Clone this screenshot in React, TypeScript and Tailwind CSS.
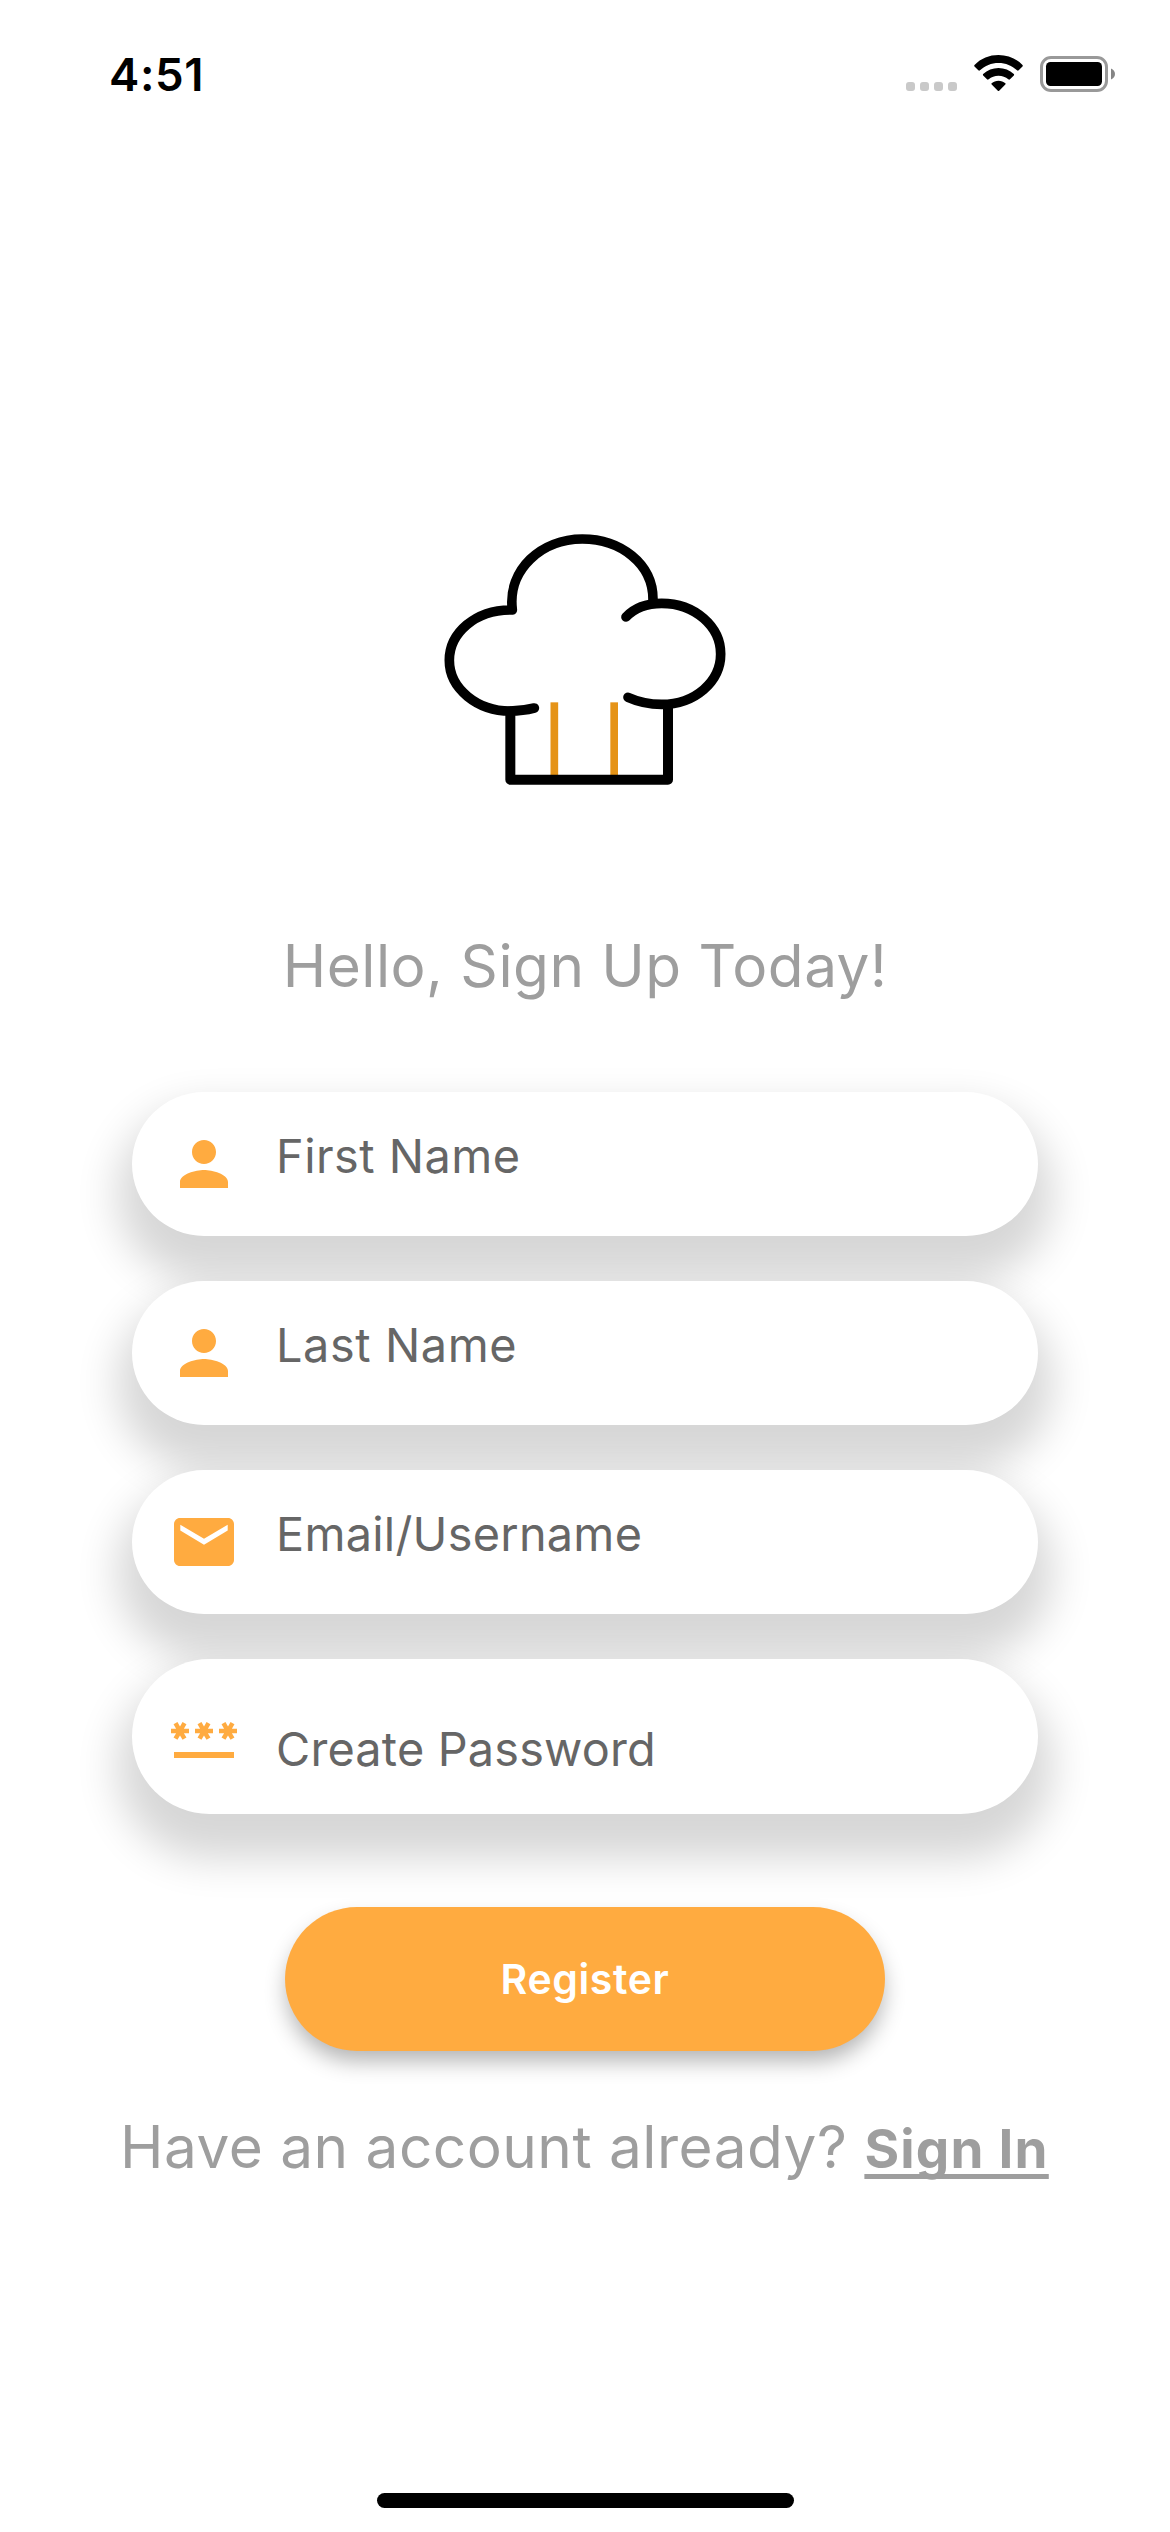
import type { ReactNode } from "react";

function StatusBar() {
  return (
    <header className="flex h-[142px] items-start justify-between pl-[109px] pr-[55px]">
      <span className="mt-[47px] text-[45.5px] leading-[56px] font-semibold tracking-[0.6px] text-black">
        4:51
      </span>
      <div className="mt-[55px] flex h-[37px] items-start">
        <div className="mt-[27px] flex gap-[5px]">
          {[0, 1, 2, 3].map((i) => (
            <span key={i} className="size-[9px] rounded-[3px] bg-[#c9c9c9]" />
          ))}
        </div>
        <svg className="ml-[17px] h-[36px] w-[49px]" viewBox="0 0 147 108">
          <path d="M73.500 0C101 0 126 10 145.500 30Q147.500 32.500 145.500 34.500L134 46Q131.500 48 129 46C114 32 95 24 73.500 24C52 24 33 32 18 46Q15.500 48 13 46L1.500 34.500Q-0.500 32.500 1.500 30C21 10 46 0 73.500 0Z" />
          <path d="M73.500 39C91 39 107 46 119.500 57Q121.500 59.500 119.500 61.500L108 73Q105.500 75 103 73C95 66 85 62 73.500 62C62 62 52 66 44 73Q41.500 75 39 73L27.500 61.500Q25.500 59.500 27.500 57C40 46 56 39 73.500 39Z" />
          <path d="M73.500 77C81.500 77 88.500 80 94 84.500Q96 86.500 94 88.500L75.500 107Q73.500 108.500 71.500 107L53 88.500Q51 86.500 53 84.500C58.500 80 65.500 77 73.500 77Z" />
        </svg>
        <svg className="ml-[17px] h-[37px] w-[75px]" viewBox="0 0 75 37">
          <rect x="1.500" y="2.500" width="65" height="33" rx="9.500" fill="none" stroke="#999" strokeWidth="3" />
          <rect x="6" y="7" width="56" height="24" rx="4.500" />
          <path d="M71 13.500C73.500 14.500 75 16.500 75 19S73.500 23.500 71 24.500Z" fill="#858585" />
        </svg>
      </div>
    </header>
  );
}

function ChefHat() {
  return (
    <svg className="h-[280px] w-[310px] self-start ml-[430px]" viewBox="0 0 930 840" fill="none">
      <g stroke="#e59317" strokeWidth="23">
        <path d="M373 547V768" />
        <path d="M552.500 547V768" />
      </g>
      <g stroke="#000" strokeWidth="29" strokeLinejoin="round" strokeLinecap="round">
        <path d="M241 574V779.500H714V555" strokeWidth="30" />
        <path d="M669 240C670 130 570 57 457 57C335 57 232 148 247 270C135 268 58 340 58 421C58 507 143 573 240 573C268 573 290 570 313 564" />
        <path d="M588 291C615 262 650 250 695 250C795 250 872 320 872 402C872 485 795 553 695 553C655 553 625 546 594 532" />
      </g>
    </svg>
  );
}

function MaterialIcon({ d }: { d: string }) {
  return (
    <svg className="size-[72px] shrink-0 text-[#ffab40]" viewBox="0 0 24 24" fill="currentColor">
      <path d={d} />
    </svg>
  );
}

const PERSON =
  "M12 12c2.210 0 4-1.790 4-4s-1.790-4-4-4-4 1.790-4 4 1.790 4 4 4zm0 2c-2.670 0-8 1.340-8 4v2h16v-2c0-2.660-5.330-4-8-4z";
const MAIL =
  "M20 4H4c-1.100 0-1.990.9-1.990 2L2 18c0 1.100.9 2 2 2h16c1.100 0 2-.9 2-2V6c0-1.100-.9-2-2-2zm-.1 4.200l-7.900 4.700-7.900-4.700V6.250l7.900 4.650 7.900-4.650v1.950z";
const PASSWORD =
  "M2 17h20v2H2v-2zm1.150-4.050L4 11.470l.85 1.480 1.300-.75-.85-1.480H7v-1.500H5.300l.85-1.470L4.850 7 4 8.470 3.150 7l-1.300.75.85 1.470H1v1.500h1.700l-.85 1.480 1.300.75zm6.700-.75l1.300.75.85-1.480.85 1.480 1.300-.75-.85-1.480H15v-1.500h-1.700l.85-1.470-1.300-.75L12 8.470 11.150 7l-1.300.75.85 1.470H9v1.500h1.700l-.85 1.480zM23 9.220h-1.700l.85-1.470-1.300-.75L20 8.470 19.150 7l-1.300.75.85 1.470H17v1.500h1.700l-.85 1.480 1.300.75.85-1.480.85 1.480 1.300-.75-.85-1.480H23v-1.500z";

type FieldProps = { icon: ReactNode; label: string; size: string; text: string };

function Field({ icon, label, size, text }: FieldProps) {
  return (
    <label
      className={`flex w-full pl-[36px] bg-white shadow-[0_30px_42px_15px_rgba(0,0,0,0.16)] ${size}`}
    >
      {icon}
      <span className={`ml-[36px] text-[46.8px] leading-[56px] text-[#666] ${text}`}>{label}</span>
    </label>
  );
}

export default function App() {
  return (
    <div className="flex h-[2532px] w-[1170px] flex-col overflow-hidden bg-white font-[Inter,sans-serif]">
      <StatusBar />
      <main className="flex grow flex-col items-center pt-[378px]">
        <ChefHat />
        <h1 className="mt-[131px] text-[58.5px] leading-[70px] font-normal tracking-[0.48px] whitespace-nowrap text-[#9e9e9e]">
          Hello, Sign Up Today!
        </h1>
        <form className="mt-[91px] flex w-[906px] flex-col gap-[45px]">
          <Field
            icon={<MaterialIcon d={PERSON} />}
            label="First Name"
            size="h-[144px] pt-[36px] rounded-[72px]"
            text="tracking-[0.5px]"
          />
          <Field
            icon={<MaterialIcon d={PERSON} />}
            label="Last Name"
            size="h-[144px] pt-[36px] rounded-[72px]"
            text="tracking-[0.6px]"
          />
          <Field
            icon={<MaterialIcon d={MAIL} />}
            label="Email/Username"
            size="h-[144px] pt-[36px] rounded-[72px]"
            text="tracking-[0.28px]"
          />
          <Field
            icon={<MaterialIcon d={PASSWORD} />}
            label="Create Password"
            size="h-[155px] pt-[42px] rounded-[77.5px]"
            text="mt-[20px] tracking-[0.2px]"
          />
        </form>
        <button className="relative mt-[92.5px] h-[144px] w-[600px] rounded-[72px] bg-[#ffab40] text-[41px] leading-[50px] font-semibold tracking-[0.6px] text-white shadow-[0_12px_22px_-2px_rgba(0,0,0,0.3)]">
          Register
        </button>
        <p className="mt-[61.5px] flex items-baseline gap-[17px] self-start pl-[120px] text-[58.5px] leading-[70px] tracking-[0.49px] whitespace-nowrap text-[#9e9e9e]">
          <span>Have an account already?</span>
          <a className="text-[53px] font-bold tracking-[1.2px] underline decoration-[5px] underline-offset-[6px] [text-decoration-skip-ink:none]">
            Sign In
          </a>
        </p>
      </main>
      <div className="mx-auto mb-[24px] h-[15px] w-[417px] rounded-full bg-black" />
    </div>
  );
}
